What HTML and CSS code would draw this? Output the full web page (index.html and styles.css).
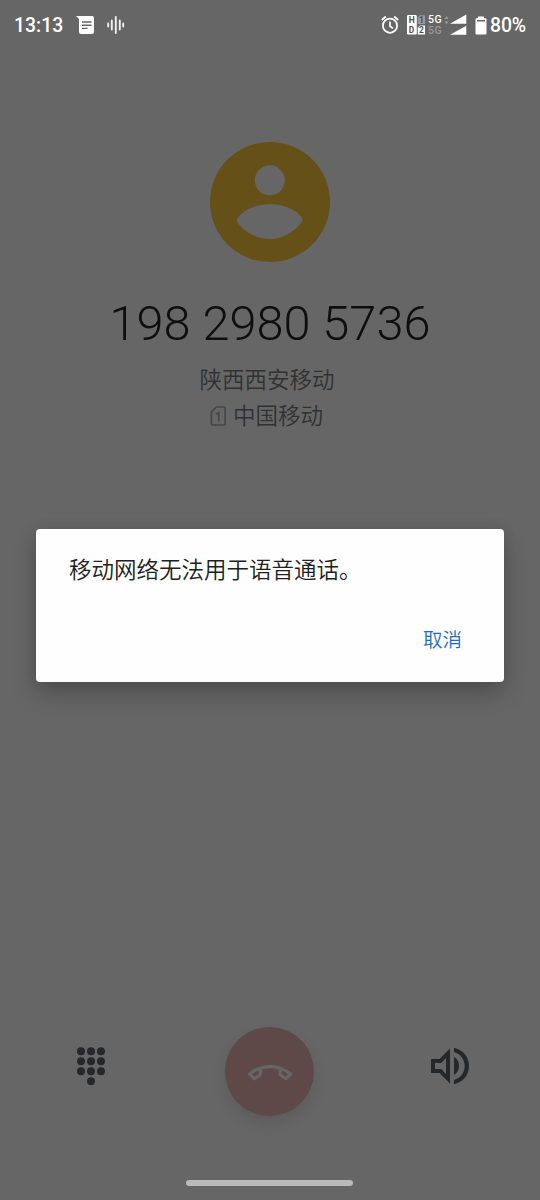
FILE: index.html
```
<!DOCTYPE html>
<html lang="zh-CN">
<head>
<meta charset="utf-8">
<title>通话</title>
<link rel="stylesheet" href="styles.css">
</head>
<body>
<div class="screen">
  <header class="status">
    <div class="status-left">
      <span class="clock">13:13</span>
      <svg class="msg" width="19" height="20" viewBox="0 0 19 20"><path d="M0 1H16Q18 1 18 3V17Q18 19 16 19H5Q3 19 3 17V4Z" fill="#fff"/><path d="M6 7H15.5M6 10.2H15.5M6 13.4H11.5" stroke="#666" stroke-width="1.4"/></svg>
      <svg class="wave" width="18" height="20" viewBox="0 0 18 20"><path d="M1.2 8.5V11.5M4.8 5.5V14.5M8.8 2V18M12.8 5.5V14.5M16.2 8.5V11.5" stroke="#eee" stroke-width="1.9" stroke-linecap="round"/></svg>
    </div>
    <div class="status-right">
      <svg class="alarm" width="18" height="20" viewBox="0 0 18 20" fill="none" stroke="#fff" stroke-width="1.7"><circle cx="9" cy="10.7" r="7.1"/><path d="M9 6.6V11.2L12 13.4M.8 5L4.8 1.5M17.2 5L13.2 1.5"/></svg>
      <svg class="volte" width="19" height="20" viewBox="0 0 19 20"><rect x="0" y="0" width="9.8" height="19.5" rx="1.3" fill="#fff"/><path d="M13 .2H18V9H10.8V2.4Z" fill="#999"/><path d="M13 10.5H18V19.5H10.8V12.7Z" fill="#fff"/><g class="tiny"><text x="1.8" y="8.2">H</text><text x="1.8" y="17.8">D</text><text x="12" y="7.8">1</text><text x="12" y="18">2</text></g></svg>
      <div class="network"><span>5G</span><span class="idle">5G</span></div>
      <svg class="arrows" width="5" height="20" viewBox="0 0 5 20"><path d="M2.5 1L4.5 4H.5ZM2.5 9.5L4.5 6.5H.5Z" fill="#999"/></svg>
      <svg class="signal" width="17" height="22" viewBox="0 0 17 22"><path d="M0 9.8L16.3 .5V9.8ZM0 20.8L16.3 11.8V20.8Z" fill="#fff"/></svg>
      <svg class="battery" width="12" height="19" viewBox="0 0 12 19"><path d="M3 .5H9V2.2H10.5Q11.5 2.2 11.5 3.2V17.5Q11.5 18.5 10.5 18.5H1.5Q.5 18.5 .5 17.5V3.2Q.5 2.2 1.5 2.2H3Z" fill="#fff"/><path d="M2 4.7H10" stroke="#666" stroke-width="1.5"/></svg>
      <span class="percent">80%</span>
    </div>
  </header>

  <main class="call">
    <svg class="avatar" width="120" height="120" viewBox="0 0 120 120"><circle cx="60" cy="60" r="60" fill="#655017"/><circle cx="59.8" cy="38.3" r="15" fill="#666"/><path d="M27.5 76.5C34 66.5 48 62 60 62S86 66.5 92 76Q93 78 92 79.5C84 91 72 97 60 97S35 91 27.3 80Q26.4 78 27.5 76.5Z" fill="#666"/></svg>
    <h1 class="number">198 2980 5736</h1>
    <p class="place">陕西西安移动</p>
    <p class="carrier"><svg width="16" height="20" viewBox="0 0 16 20" fill="none" stroke="#464646" stroke-width="1.7"><path d="M6.2 1H14Q15.2 1 15.2 2.3V17.7Q15.2 19 14 19H2.7Q1.4 19 1.4 17.7V6Z"/><path d="M5.8 8L8.8 6.8V15.2"/></svg><span>中国移动</span></p>
  </main>

  <footer class="controls">
    <svg class="keypad" width="28" height="38" viewBox="0 0 28 38" fill="#25282a"><circle cx="4" cy="4.3" r="4"/><circle cx="14" cy="4.3" r="4"/><circle cx="24" cy="4.3" r="4"/><circle cx="4" cy="14.3" r="4"/><circle cx="14" cy="14.3" r="4"/><circle cx="24" cy="14.3" r="4"/><circle cx="4" cy="24.3" r="4"/><circle cx="14" cy="24.3" r="4"/><circle cx="24" cy="24.3" r="4"/><circle cx="14" cy="34.2" r="4"/></svg>
    <div class="hangup"><svg width="46" height="18" viewBox="0 0 46 18" fill="none" stroke="#666" stroke-width="3.2" stroke-linejoin="round"><path d="M13.3 5.2Q23.2 1.6 33.1 5.2Q39.5 7.2 43.7 11.2L38.6 15.8L33.1 11.6V5.2M13.3 5.2Q6.9 7.2 2.7 11.2L7.8 15.8L13.3 11.6V5.2"/></svg></div>
    <svg class="speaker" width="39" height="38" viewBox="0 0 39 38" fill="#25282a"><path fill-rule="evenodd" d="M0 12H8.5L19 1.5V36.5L8.5 26H0ZM4 16V22H10.2L15 27V11L10.2 16Z"/><path d="M23 10Q28 12.8 28 19T23 28ZM23 .7C32 2.8 38 10 38 19S32 35.2 23 37.3V33C29.5 31 33.7 25.6 33.7 19S29.5 7 23 5Z"/></svg>
  </footer>
  <div class="home-bar"></div>

  <section class="dialog" role="dialog">
    <p class="message">移动网络无法用于语音通话。</p>
    <button class="cancel">取消</button>
  </section>
</div>
</body>
</html>
```
FILE: styles.css
```
* { box-sizing: border-box; }
body { margin: 0; background: #666; font-family: Roboto, "Noto Sans CJK SC", sans-serif; }
svg { display: block; flex: none; }
h1, p { margin: 0; }
.screen { position: relative; height: 1200px; display: flex; flex-direction: column; overflow: hidden; }

.status { height: 50px; padding: 0 14px 0 14px; display: flex; justify-content: space-between; color: #fff; }
.status-left, .status-right { display: flex; align-items: center; }
.clock, .percent { font-size: 19.4px; line-height: 24px; font-weight: 500; padding-top: 2px; }
.clock { width: 49px; }
.msg { margin-left: 13px; }
.wave { margin-left: 12px; }
.alarm { margin-right: 8px; }
.tiny { font: 700 8.5px Roboto, sans-serif; fill: #505050; }
.network { width: 15px; margin-left: 2px; display: flex; flex-direction: column; font-size: 10.5px; font-weight: 500; line-height: 11px; letter-spacing: .5px; }
.idle { color: #999; }
.arrows { margin-left: 1px; }
.signal { margin: 0 8px 0 1px; }
.battery { margin-right: 3px; }
.percent { width: 36px; letter-spacing: -.1px; }

.call { flex: 1; padding-top: 92px; display: flex; flex-direction: column; align-items: center; }
.number { margin-top: 32px; height: 60px; font-size: 48.7px; line-height: 60px; font-weight: 300; color: #0e0e0e; white-space: nowrap; }
.place, .carrier { font-size: 22.5px; line-height: 36px; font-weight: 350; color: #303232; }
.place { margin: 8px 6px 0 0; }
.carrier { display: flex; align-items: center; gap: 7px; margin-right: 7px; }
.carrier svg { margin-bottom: 1px; }

.controls { height: 140px; padding: 0 70px 0 77px; display: grid; grid-template-columns: 148px 89px 1fr; align-items: start; }
.keypad { margin-top: 14px; }
.hangup { width: 89px; height: 89px; margin-top: -6px; border-radius: 50%; background: #5f4848; box-shadow: 0 7px 16px rgba(0, 0, 0, .1); display: flex; align-items: center; justify-content: center; }
.speaker { margin-top: 14px; justify-self: end; }
.home-bar { width: 167px; height: 6px; margin: 7px auto 14px 186px; border-radius: 3px; background: #bababa; }

.dialog { position: absolute; left: 36px; right: 36px; top: 529px; height: 153px; padding: 24px 27px 18px 33px; border-radius: 4px; background: #fefefe; box-shadow: 0 12px 24px rgba(0, 0, 0, .22), 0 0 14px rgba(0, 0, 0, .08); display: flex; flex-direction: column; justify-content: space-between; align-items: flex-start; }
.message { font-size: 22.5px; line-height: 34px; font-weight: 350; color: #202020; }
.cancel { align-self: flex-end; border: 0; padding: 0 15px; background: none; font: 350 19.5px/46px Roboto, "Noto Sans CJK SC", sans-serif; color: #1a6dd0; }
```
